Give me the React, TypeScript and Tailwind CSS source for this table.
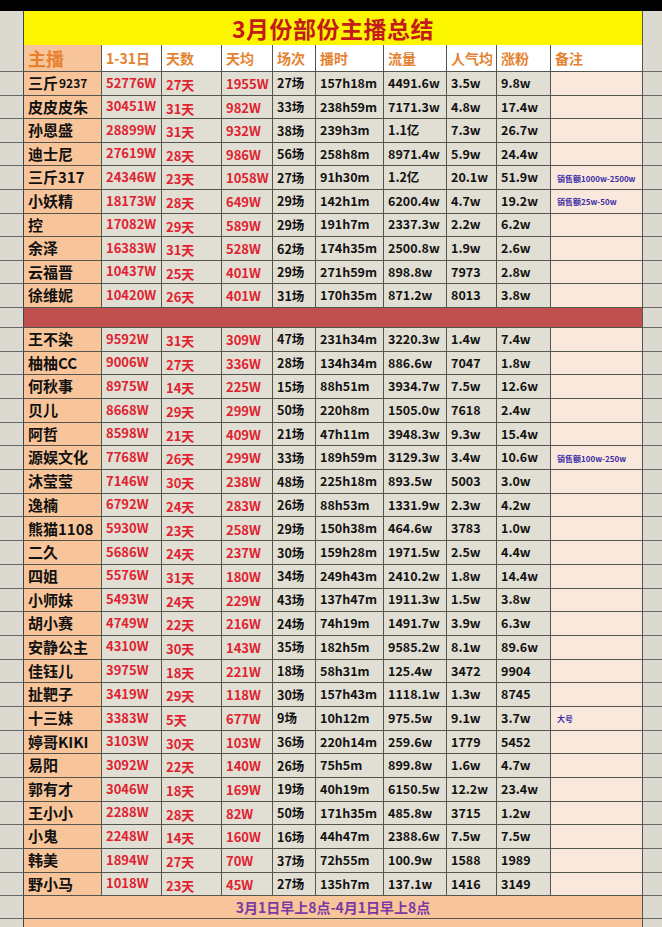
const cols =
  "grid grid-cols-[24px_78px_60px_60px_51px_43px_68px_63px_50px_54px_92px_19px]"

type Row = {
  name: string
  sub?: string
  total: string
  days: string
  avg: string
  shows: string
  hours: string
  flow: string
  pop: string
  fans: string
  note?: string
}

const top: Row[] = [
  { name: "三斤", sub: "9237", total: "52776W", days: "27天", avg: "1955W", shows: "27场", hours: "157h18m", flow: "4491.6w", pop: "3.5w", fans: "9.8w" },
  { name: "皮皮皮朱", total: "30451W", days: "31天", avg: "982W", shows: "33场", hours: "238h59m", flow: "7171.3w", pop: "4.8w", fans: "17.4w" },
  { name: "孙恩盛", total: "28899W", days: "31天", avg: "932W", shows: "38场", hours: "239h3m", flow: "1.1亿", pop: "7.3w", fans: "26.7w" },
  { name: "迪士尼", total: "27619W", days: "28天", avg: "986W", shows: "56场", hours: "258h8m", flow: "8971.4w", pop: "5.9w", fans: "24.4w" },
  { name: "三斤317", total: "24346W", days: "23天", avg: "1058W", shows: "27场", hours: "91h30m", flow: "1.2亿", pop: "20.1w", fans: "51.9w", note: "销售额1000w-2500w" },
  { name: "小妖精", total: "18173W", days: "28天", avg: "649W", shows: "29场", hours: "142h1m", flow: "6200.4w", pop: "4.7w", fans: "19.2w", note: "销售额25w-50w" },
  { name: "控", total: "17082W", days: "29天", avg: "589W", shows: "29场", hours: "191h7m", flow: "2337.3w", pop: "2.2w", fans: "6.2w" },
  { name: "余泽", total: "16383W", days: "31天", avg: "528W", shows: "62场", hours: "174h35m", flow: "2500.8w", pop: "1.9w", fans: "2.6w" },
  { name: "云福晋", total: "10437W", days: "25天", avg: "401W", shows: "29场", hours: "271h59m", flow: "898.8w", pop: "7973", fans: "2.8w" },
  { name: "徐维妮", total: "10420W", days: "26天", avg: "401W", shows: "31场", hours: "170h35m", flow: "871.2w", pop: "8013", fans: "3.8w" },
]

const rest: Row[] = [
  { name: "王不染", total: "9592W", days: "31天", avg: "309W", shows: "47场", hours: "231h34m", flow: "3220.3w", pop: "1.4w", fans: "7.4w" },
  { name: "柚柚CC", total: "9006W", days: "27天", avg: "336W", shows: "28场", hours: "134h34m", flow: "886.6w", pop: "7047", fans: "1.8w" },
  { name: "何秋事", total: "8975W", days: "14天", avg: "225W", shows: "15场", hours: "88h51m", flow: "3934.7w", pop: "7.5w", fans: "12.6w" },
  { name: "贝儿", total: "8668W", days: "29天", avg: "299W", shows: "50场", hours: "220h8m", flow: "1505.0w", pop: "7618", fans: "2.4w" },
  { name: "阿哲", total: "8598W", days: "21天", avg: "409W", shows: "21场", hours: "47h11m", flow: "3948.3w", pop: "9.3w", fans: "15.4w" },
  { name: "源娱文化", total: "7768W", days: "26天", avg: "299W", shows: "33场", hours: "189h59m", flow: "3129.3w", pop: "3.4w", fans: "10.6w", note: "销售额100w-250w" },
  { name: "沐莹莹", total: "7146W", days: "30天", avg: "238W", shows: "48场", hours: "225h18m", flow: "893.5w", pop: "5003", fans: "3.0w" },
  { name: "逸楠", total: "6792W", days: "24天", avg: "283W", shows: "26场", hours: "88h53m", flow: "1331.9w", pop: "2.3w", fans: "4.2w" },
  { name: "熊猫1108", total: "5930W", days: "23天", avg: "258W", shows: "29场", hours: "150h38m", flow: "464.6w", pop: "3783", fans: "1.0w" },
  { name: "二久", total: "5686W", days: "24天", avg: "237W", shows: "30场", hours: "159h28m", flow: "1971.5w", pop: "2.5w", fans: "4.4w" },
  { name: "四姐", total: "5576W", days: "31天", avg: "180W", shows: "34场", hours: "249h43m", flow: "2410.2w", pop: "1.8w", fans: "14.4w" },
  { name: "小师妹", total: "5493W", days: "24天", avg: "229W", shows: "43场", hours: "137h47m", flow: "1911.3w", pop: "1.5w", fans: "3.8w" },
  { name: "胡小赛", total: "4749W", days: "22天", avg: "216W", shows: "24场", hours: "74h19m", flow: "1491.7w", pop: "3.9w", fans: "6.3w" },
  { name: "安静公主", total: "4310W", days: "30天", avg: "143W", shows: "35场", hours: "182h5m", flow: "9585.2w", pop: "8.1w", fans: "89.6w" },
  { name: "佳钰儿", total: "3975W", days: "18天", avg: "221W", shows: "18场", hours: "58h31m", flow: "125.4w", pop: "3472", fans: "9904" },
  { name: "扯靶子", total: "3419W", days: "29天", avg: "118W", shows: "30场", hours: "157h43m", flow: "1118.1w", pop: "1.3w", fans: "8745" },
  { name: "十三妹", total: "3383W", days: "5天", avg: "677W", shows: "9场", hours: "10h12m", flow: "975.5w", pop: "9.1w", fans: "3.7w", note: "大号" },
  { name: "婷哥KIKI", total: "3103W", days: "30天", avg: "103W", shows: "36场", hours: "220h14m", flow: "259.6w", pop: "1779", fans: "5452" },
  { name: "易阳", total: "3092W", days: "22天", avg: "140W", shows: "26场", hours: "75h5m", flow: "899.8w", pop: "1.6w", fans: "4.7w" },
  { name: "郭有才", total: "3046W", days: "18天", avg: "169W", shows: "19场", hours: "40h19m", flow: "6150.5w", pop: "12.2w", fans: "23.4w" },
  { name: "王小小", total: "2288W", days: "28天", avg: "82W", shows: "50场", hours: "171h35m", flow: "485.8w", pop: "3715", fans: "1.2w" },
  { name: "小鬼", total: "2248W", days: "14天", avg: "160W", shows: "16场", hours: "44h47m", flow: "2388.6w", pop: "7.5w", fans: "7.5w" },
  { name: "韩美", total: "1894W", days: "27天", avg: "70W", shows: "37场", hours: "72h55m", flow: "100.9w", pop: "1588", fans: "1989" },
  { name: "野小马", total: "1018W", days: "23天", avg: "45W", shows: "27场", hours: "135h7m", flow: "137.1w", pop: "1416", fans: "3149" },
]

const headers = ["1-31日", "天数", "天均", "场次", "播时", "流量", "人气均", "涨粉", "备注"]

function Gutter({ left }: { left?: boolean }) {
  return (
    <div
      className={
        "bg-[#dcdad0] border-b border-[#6a6a66] " + (left ? "border-r border-r-[#444]" : "")
      }
    />
  )
}

function Cell({ children, className = "" }: { children?: React.ReactNode; className?: string }) {
  return (
    <div
      className={
        "flex items-center pl-[4px] border-r border-b border-[#55554f] whitespace-nowrap overflow-hidden " +
        className
      }
    >
      {children}
    </div>
  )
}

function DataRow({ r, h }: { r: Row; h: string }) {
  return (
    <div className={cols + " " + h}>
      <Gutter left />
      <Cell className="bg-[#f8c59b] text-[15px] font-bold text-[#111]">
        {r.name}
        {r.sub && <span className="text-[12px] ml-[1px]">{r.sub}</span>}
      </Cell>
      <Cell className="bg-[#e1ded3] text-[13px] font-bold text-[#e02230] pb-[2px]">{r.total}</Cell>
      <Cell className="bg-[#e1ded3] text-[13px] font-bold text-[#e02230] pt-[3px]">{r.days}</Cell>
      <Cell className="bg-[#e1ded3] text-[13px] font-bold text-[#e02230] pt-[1px]">{r.avg}</Cell>
      <Cell className="bg-[#e1ded3] text-[12.5px] font-bold pt-[1px]">{r.shows}</Cell>
      <Cell className="bg-[#e1ded3] text-[12.5px] font-bold">{r.hours}</Cell>
      <Cell className="bg-[#e1ded3] text-[12.5px] font-bold">{r.flow}</Cell>
      <Cell className="bg-[#e1ded3] text-[12.5px] font-bold">{r.pop}</Cell>
      <Cell className="bg-[#e1ded3] text-[12.5px] font-bold">{r.fans}</Cell>
      <Cell className="bg-[#fbe8dc] text-[8px] font-bold text-[#3b2ea8] pl-[6px] pt-[2px]">{r.note}</Cell>
      <Gutter />
    </div>
  )
}

export default function App() {
  return (
    <div
      className="w-[662px] h-[927px] overflow-hidden bg-[#dcdad0] text-[#111]"
      style={{ fontFamily: '"Noto Sans CJK SC", "Noto Sans", sans-serif' }}
    >
      <div className="h-[11px] bg-black" />

      {/* title */}
      <div className={cols + " h-[34px]"}>
        <Gutter left />
        <div className="col-span-10 bg-[#fbf500] border-r border-b border-[#55554f] flex items-center justify-center">
          <span className="text-[23px] font-bold text-[#c41a1a] tracking-[0.5px]">3月份部份主播总结</span>
        </div>
        <Gutter />
      </div>

      {/* header */}
      <div className={cols + " h-[27px]"}>
        <Gutter left />
        <Cell className="bg-[#f8c59b] text-[18px] font-bold text-[#e5822f]">主播</Cell>
        {headers.map((t) => (
          <Cell key={t} className="bg-white text-[14px] font-bold text-[#e5822f] pl-[3px]">
            {t}
          </Cell>
        ))}
        <Gutter />
      </div>

      {top.map((r) => (
        <DataRow key={r.name} r={r} h="h-[23.6px]" />
      ))}

      {/* separator */}
      <div className={cols + " h-[20px]"}>
        <Gutter left />
        <div className="col-span-10 bg-[#c0504d] border-b border-r border-[#55554f]" />
        <Gutter />
      </div>

      {rest.map((r) => (
        <DataRow key={r.name} r={r} h="h-[23.7px]" />
      ))}

      {/* footer */}
      <div className={cols + " h-[23px]"}>
        <Gutter left />
        <div className="col-span-10 bg-[#f8c59b] border-b border-r border-[#55554f] flex items-center justify-center">
          <span className="text-[14px] font-bold text-[#7b3aa3]">3月1日早上8点-4月1日早上8点</span>
        </div>
        <Gutter />
      </div>
      <div className={cols + " h-[20px]"}>
        <Gutter left />
        <div className="col-span-10 bg-[#f8c59b] border-r border-[#55554f]" />
        <Gutter />
      </div>
    </div>
  )
}
